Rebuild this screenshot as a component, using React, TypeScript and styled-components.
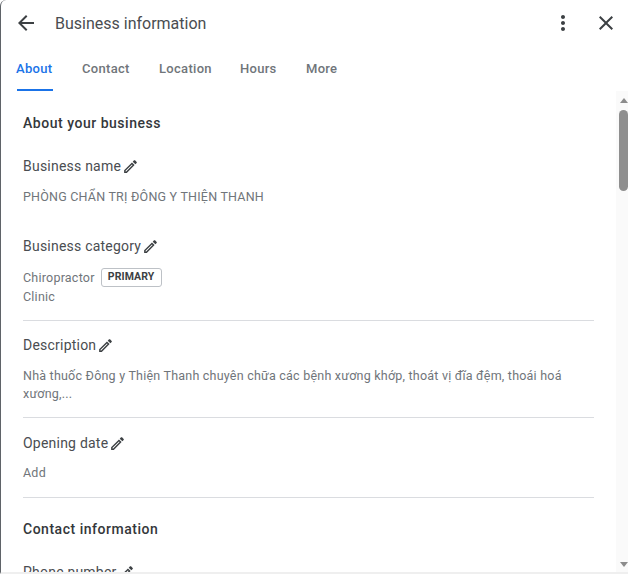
import React from "react";
import styled, { createGlobalStyle } from "styled-components";

const Global = createGlobalStyle`
  html, body { margin: 0; padding: 0; background: #fff; }
  body { font-family: Roboto, "Noto Sans", sans-serif; }
  * { box-sizing: border-box; }
`;

const Panel = styled.div`
  width: 628px;
  height: 574px;
  display: flex;
  flex-direction: column;
  overflow: hidden;
  background: #fff;
  border-left: 1px solid #5f6368;
  border-top-left-radius: 6px;
  border-bottom: 2px solid #efefef;
`;

const Header = styled.header`
  height: 46px;
  flex: none;
  display: flex;
  align-items: center;
  padding: 0 10px 0 13px;
`;

const IconButton = styled.span<{ $ml?: number }>`
  width: 24px;
  height: 24px;
  flex: none;
  display: flex;
  margin-left: ${(p) => p.$ml ?? 0}px;
  color: #3c4043;
  svg { display: block; fill: currentColor; }
`;

const Title = styled.h1`
  margin: 0 0 0 17px;
  flex: 1;
  font-size: 16px;
  font-weight: 400;
  letter-spacing: 0;
  color: #4a4d51;
`;

const Tabs = styled.nav`
  height: 45px;
  flex: none;
  display: flex;
  padding-left: 15px;
`;

const Tab = styled.div<{ $active?: boolean; $w: number }>`
  width: ${(p) => p.$w}px;
  height: 45px;
  padding-top: 15px;
  font-size: 13px;
  font-weight: 500;
  letter-spacing: 0.3px;
  line-height: 16px;
  color: ${(p) => (p.$active ? "#1a73e8" : "#70757a")};
  position: relative;
  ${(p) =>
    p.$active &&
    `&::after {
      content: "";
      position: absolute;
      left: 1px;
      bottom: 0;
      width: 36px;
      height: 2px;
      background: #1a73e8;
    }`}
`;

const Body = styled.div`
  flex: 1;
  min-height: 0;
  display: flex;
`;

const Content = styled.main`
  flex: 1;
  min-width: 0;
  overflow: hidden;
  padding: 0 22px 0 22px;
`;

const Scrollbar = styled.div`
  width: 12px;
  flex: none;
  background: #fafafa;
  display: flex;
  flex-direction: column;
  align-items: flex-end;
  padding-top: 7px;
`;

const ArrowUp = styled.div`
  width: 0;
  height: 0;
  border-left: 4.5px solid transparent;
  border-right: 4.5px solid transparent;
  border-bottom: 5px solid #8c8c8c;
`;

const ArrowDown = styled.div`
  width: 0;
  height: 0;
  margin-top: auto;
  margin-bottom: 5px;
  border-left: 4.5px solid transparent;
  border-right: 4.5px solid transparent;
  border-top: 5px solid #8c8c8c;
`;

const Thumb = styled.div`
  width: 9px;
  height: 81px;
  margin-top: 7px;
  border-radius: 5px;
  background: #8f8f8f;
`;

const SectionTitle = styled.h2`
  margin: 0;
  font-size: 14px;
  font-weight: 500;
  line-height: 20px;
  letter-spacing: 0.52px;
  color: #34373b;
`;

const Group = styled.section<{ $top: number; $bottom: number; $rule?: boolean }>`
  margin-top: ${(p) => p.$top}px;
  padding-bottom: ${(p) => p.$bottom}px;
  border-bottom: ${(p) => (p.$rule ? "1px solid #dadce0" : "none")};
`;

const FieldLabel = styled.div`
  display: flex;
  align-items: center;
  height: 20px;
  font-size: 14px;
  letter-spacing: 0.22px;
  color: #4a4d51;
  svg { display: block; width: 17px; height: 17px; fill: #3c4043; margin-left: 1px; flex: none; }
`;

const Value = styled.div<{ $top?: number }>`
  margin-top: ${(p) => p.$top ?? 0}px;
  font-size: 12.5px;
  line-height: 18px;
  letter-spacing: 0.22px;
  color: #70757a;
`;

const CategoryRow = styled.div`
  margin-top: 12px;
  display: flex;
  align-items: center;
  height: 20px;
`;

const Badge = styled.span`
  margin-left: 6px;
  height: 19px;
  width: 61px;
  margin-top: -1px;
  display: flex;
  align-items: center;
  justify-content: center;
  padding-bottom: 2px;
  border: 1px solid #bdc1c6;
  border-radius: 3px;
  font-size: 10.5px;
  font-weight: 700;
  letter-spacing: 0.1px;
  color: #3c4043;
`;

const Pencil = () => (
  <svg viewBox="0 0 24 24" aria-hidden="true">
    <path d="M14.06 9.02l.92.92L5.92 19H5v-.92l9.06-9.06M17.66 3c-.25 0-.51.1-.7.29l-1.83 1.83 3.75 3.75 1.83-1.83c.39-.39.39-1.02 0-1.41l-2.34-2.34c-.2-.2-.45-.29-.71-.29zm-3.6 3.19L3 17.25V21h3.75L17.81 9.94l-3.75-3.75z" />
  </svg>
);

const tabs: [string, number][] = [
  ["About", 66],
  ["Contact", 77],
  ["Location", 81],
  ["Hours", 66],
  ["More", 40],
];

export default function App() {
  return (
    <Panel>
      <Global />
      <Header>
        <IconButton>
          <svg width="24" height="24" viewBox="0 0 24 24">
            <path d="M20 11H7.83l5.59-5.59L12 4l-8 8 8 8 1.41-1.41L7.83 13H20v-2z" />
          </svg>
        </IconButton>
        <Title>Business information</Title>
        <IconButton>
          <svg width="24" height="24" viewBox="0 0 24 24">
            <path d="M12 8c1.1 0 2-.9 2-2s-.9-2-2-2-2 .9-2 2 .9 2 2 2zm0 2c-1.1 0-2 .9-2 2s.9 2 2 2 2-.9 2-2-.9-2-2-2zm0 6c-1.1 0-2 .9-2 2s.9 2 2 2 2-.9 2-2-.9-2-2-2z" />
          </svg>
        </IconButton>
        <IconButton $ml={19}>
          <svg width="24" height="24" viewBox="0 0 24 24">
            <path d="M19 6.41L17.59 5 12 10.59 6.41 5 5 6.41 10.59 12 5 17.59 6.41 19 12 13.41 17.59 19 19 17.59 13.41 12 19 6.41z" />
          </svg>
        </IconButton>
      </Header>
      <Tabs>
        {tabs.map(([t, w], i) => (
          <Tab key={t} $w={w} $active={i === 0}>
            {t}
          </Tab>
        ))}
      </Tabs>
      <Body>
        <Content>
          <Group $top={22} $bottom={0}>
            <SectionTitle>About your business</SectionTitle>
          </Group>
          <Group $top={23} $bottom={0}>
            <FieldLabel>
              Business name
              <Pencil />
            </FieldLabel>
            <Value $top={12}>PHÒNG CHẨN TRỊ ĐÔNG Y THIỆN THANH</Value>
          </Group>
          <Group $top={30} $bottom={14} $rule>
            <FieldLabel>
              Business category
              <Pencil />
            </FieldLabel>
            <CategoryRow>
              <Value>Chiropractor</Value>
              <Badge>PRIMARY</Badge>
            </CategoryRow>
            <Value>Clinic</Value>
          </Group>
          <Group $top={14} $bottom={14} $rule>
            <FieldLabel>
              Description
              <Pencil />
            </FieldLabel>
            <Value $top={12}>
              Nhà thuốc Đông y Thiện Thanh chuyên chữa các bệnh xương khớp, thoát vị đĩa đệm, thoái hoá xương,...
            </Value>
          </Group>
          <Group $top={15} $bottom={15} $rule>
            <FieldLabel>
              Opening date
              <Pencil />
            </FieldLabel>
            <Value $top={11}>Add</Value>
          </Group>
          <Group $top={21} $bottom={0}>
            <SectionTitle>Contact information</SectionTitle>
          </Group>
          <Group $top={23} $bottom={0}>
            <FieldLabel>
              Phone number
              <Pencil />
            </FieldLabel>
          </Group>
        </Content>
        <Scrollbar>
          <ArrowUp />
          <Thumb />
          <ArrowDown />
        </Scrollbar>
      </Body>
    </Panel>
  );
}
